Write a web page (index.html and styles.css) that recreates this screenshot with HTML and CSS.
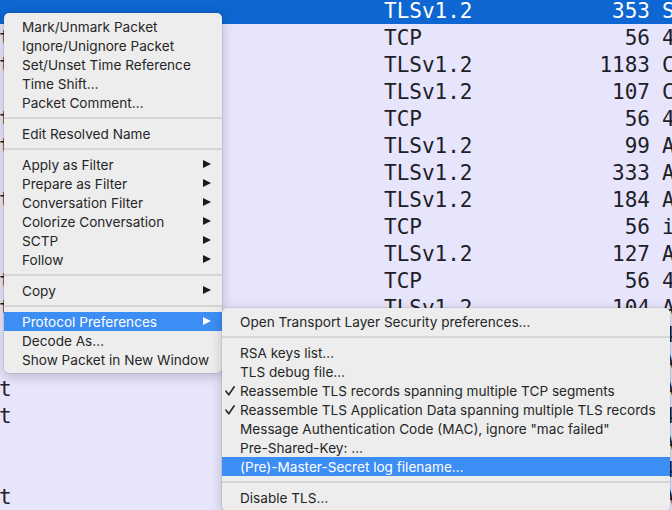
FILE: index.html
```html
<!DOCTYPE html>
<html>
<head>
<meta charset="utf-8">
<link rel="stylesheet" href="styles.css">
</head>
<body>
<div class="list">
  <div class="row sel"><span class="c-src"></span><span class="c-proto">TLSv1.2</span><span class="c-len">353</span><span class="c-info">S</span></div>
  <div class="row"><span class="c-src">t</span><span class="c-proto">TCP</span><span class="c-len">56</span><span class="c-info">4</span></div>
  <div class="row"><span class="c-src">t</span><span class="c-proto">TLSv1.2</span><span class="c-len">1183</span><span class="c-info">C</span></div>
  <div class="row"><span class="c-src"></span><span class="c-proto">TLSv1.2</span><span class="c-len">107</span><span class="c-info">C</span></div>
  <div class="row"><span class="c-src">t</span><span class="c-proto">TCP</span><span class="c-len">56</span><span class="c-info">4</span></div>
  <div class="row"><span class="c-src">t</span><span class="c-proto">TLSv1.2</span><span class="c-len">99</span><span class="c-info">A</span></div>
  <div class="row"><span class="c-src"></span><span class="c-proto">TLSv1.2</span><span class="c-len">333</span><span class="c-info">A</span></div>
  <div class="row"><span class="c-src">t</span><span class="c-proto">TLSv1.2</span><span class="c-len">184</span><span class="c-info">A</span></div>
  <div class="row"><span class="c-src"></span><span class="c-proto">TCP</span><span class="c-len">56</span><span class="c-info">i</span></div>
  <div class="row"><span class="c-src"></span><span class="c-proto">TLSv1.2</span><span class="c-len">127</span><span class="c-info">A</span></div>
  <div class="row"><span class="c-src">t</span><span class="c-proto">TCP</span><span class="c-len">56</span><span class="c-info">4</span></div>
  <div class="row"><span class="c-src">t</span><span class="c-proto">TLSv1.2</span><span class="c-len">104</span><span class="c-info">A</span></div>
  <div class="row"><span class="c-src"></span><span class="c-proto">TCP</span><span class="c-len">56</span><span class="c-info">4</span></div>
  <div class="row"><span class="c-src"></span><span class="c-proto">TLSv1.2</span><span class="c-len">99</span><span class="c-info">A</span></div>
  <div class="row"><span class="c-src">t</span><span class="c-proto">TLSv1.2</span><span class="c-len">333</span><span class="c-info">A</span></div>
  <div class="row"><span class="c-src">t</span><span class="c-proto">TCP</span><span class="c-len">56</span><span class="c-info">4</span></div>
  <div class="row"><span class="c-src"></span><span class="c-proto">TLSv1.2</span><span class="c-len">184</span><span class="c-info">A</span></div>
  <div class="row"><span class="c-src"></span><span class="c-proto">TCP</span><span class="c-len">56</span><span class="c-info">4</span></div>
  <div class="row"><span class="c-src">t</span><span class="c-proto">TLSv1.2</span><span class="c-len">127</span><span class="c-info">A</span></div>
</div>

<div class="menu main-menu">
  <div class="item">Mark/Unmark Packet</div>
  <div class="item">Ignore/Unignore Packet</div>
  <div class="item">Set/Unset Time Reference</div>
  <div class="item">Time Shift…</div>
  <div class="item">Packet Comment…</div>
  <div class="sep"></div>
  <div class="item">Edit Resolved Name</div>
  <div class="sep"></div>
  <div class="item sub">Apply as Filter<span class="arrow"></span></div>
  <div class="item sub">Prepare as Filter<span class="arrow"></span></div>
  <div class="item sub">Conversation Filter<span class="arrow"></span></div>
  <div class="item sub">Colorize Conversation<span class="arrow"></span></div>
  <div class="item sub">SCTP<span class="arrow"></span></div>
  <div class="item sub">Follow<span class="arrow"></span></div>
  <div class="sep"></div>
  <div class="item sub">Copy<span class="arrow"></span></div>
  <div class="sep"></div>
  <div class="item sub active">Protocol Preferences<span class="arrow"></span></div>
  <div class="item">Decode As…</div>
  <div class="item">Show Packet in New Window</div>
</div>

<div class="menu sub-menu">
  <div class="item">Open Transport Layer Security preferences…</div>
  <div class="sep"></div>
  <div class="item">RSA keys list…</div>
  <div class="item">TLS debug file…</div>
  <div class="item"><svg class="check" viewBox="0 0 10 10" width="10" height="10"><path d="M1 5.2 L3.8 8.8 L9.2 0.8" fill="none" stroke="#262626" stroke-width="1.6" stroke-linecap="round" stroke-linejoin="round"/></svg>Reassemble TLS records spanning multiple TCP segments</div>
  <div class="item"><svg class="check" viewBox="0 0 10 10" width="10" height="10"><path d="M1 5.2 L3.8 8.8 L9.2 0.8" fill="none" stroke="#262626" stroke-width="1.6" stroke-linecap="round" stroke-linejoin="round"/></svg>Reassemble TLS Application Data spanning multiple TLS records</div>
  <div class="item">Message Authentication Code (MAC), ignore "mac failed"</div>
  <div class="item">Pre-Shared-Key: …</div>
  <div class="item active">(Pre)-Master-Secret log filename…</div>
  <div class="sep"></div>
  <div class="item">Disable TLS…</div>
</div>
</body>
</html>
```

FILE: styles.css
```css
html, body {
  margin: 0;
  padding: 0;
}
body {
  width: 672px;
  height: 510px;
  overflow: hidden;
  background: #e7e5fc;
  position: relative;
}
.list {
  display: flex;
  flex-direction: column;
  margin-top: -3px;
}
.row {
  height: 27px;
  display: flex;
  align-items: center;
  font-family: "DejaVu Sans Mono", "Liberation Mono", monospace;
  font-size: 21px;
  color: #1d2127;
  white-space: pre;
}
.row.sel {
  background: #0d66d1;
  color: #ffffff;
}
.c-src {
  width: 384px;
  flex: none;
  text-indent: -1px;
}
.c-proto {
  width: 200px;
  flex: none;
}
.c-len {
  width: 66px;
  flex: none;
  text-align: right;
}
.c-info {
  padding-left: 12px;
  flex: none;
}
.menu {
  position: absolute;
  background: #ededed;
  border-radius: 5px;
  padding: 4px 0;
  box-shadow: 0 3px 12px rgba(0, 0, 0, 0.22), 0 0 0 0.5px rgba(0, 0, 0, 0.12);
  font-family: Inter, "Liberation Sans", sans-serif;
  font-size: 13.6px;
  color: #262626;
}
.main-menu {
  left: 4px;
  top: 13px;
  width: 218px;
  z-index: 1;
}
.sub-menu {
  left: 222px;
  top: 308px;
  width: 448px;
  z-index: 2;
}
.item {
  height: 19px;
  box-sizing: border-box;
  padding-top: 1px;
  line-height: 19px;
  padding-left: 18px;
  position: relative;
  white-space: nowrap;
}
.item.active {
  background: #3c8df4;
  color: #ffffff;
}
.sep {
  height: 12px;
  display: flex;
  align-items: center;
}
.sep::before {
  content: "";
  display: block;
  width: 100%;
  height: 2px;
  background: #d6d6d6;
}
.arrow {
  position: absolute;
  right: 11px;
  top: 5px;
  width: 0;
  height: 0;
  border-top: 4.5px solid transparent;
  border-bottom: 4.5px solid transparent;
  border-left: 8px solid #1a1a1a;
}
.item.active .arrow {
  border-left-color: #ffffff;
}
.check {
  position: absolute;
  left: 3px;
  top: 5px;
}
```
